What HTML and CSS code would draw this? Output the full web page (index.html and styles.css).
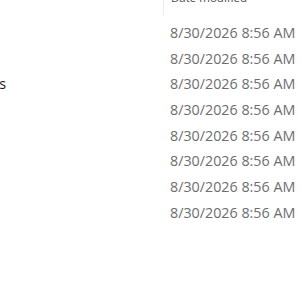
FILE: index.html
```html
<!DOCTYPE html>
<html lang="en">
<head>
    <meta charset="UTF-8">
    <title>Files</title>
    <link rel="stylesheet" href="styles.css">
</head>
<body>
    <div class="view">
        <div class="header">
            <div class="col-name head-cell">Name</div>
            <div class="col-date head-cell">Date modified</div>
        </div>
        <div class="rows">
            <div class="row"><div class="col-name"></div><div class="col-date">8/30/2026 8:56 AM</div></div>
            <div class="row"><div class="col-name"></div><div class="col-date">8/30/2026 8:56 AM</div></div>
            <div class="row"><div class="col-name">Programs</div><div class="col-date">8/30/2026 8:56 AM</div></div>
            <div class="row"><div class="col-name"></div><div class="col-date">8/30/2026 8:56 AM</div></div>
            <div class="row"><div class="col-name"></div><div class="col-date">8/30/2026 8:56 AM</div></div>
            <div class="row"><div class="col-name"></div><div class="col-date">8/30/2026 8:56 AM</div></div>
            <div class="row"><div class="col-name"></div><div class="col-date">8/30/2026 8:56 AM</div></div>
            <div class="row"><div class="col-name"></div><div class="col-date">8/30/2026 8:56 AM</div></div>
        </div>
    </div>
</body>
</html>
```

FILE: styles.css
```css
body {
    margin: 0;
    background: #fff;
    font-family: "Open Sans", sans-serif;
    overflow: hidden;
}
/* list is scrolled: header half hidden, name column mostly off to the left */
.view {
    margin: -16px 0 0 -120px;
}
.header {
    display: flex;
    align-items: flex-start;
    height: 36px;
}
.head-cell {
    height: 31px;
    box-sizing: border-box;
    padding-top: 7px;
    font-size: 11.5px;
    line-height: 13px;
    color: #4c4c4c;
}
.header .col-name {
    border-right: 1px solid #ececec;
    color: transparent;
}
.col-name {
    width: 283px;
    flex: none;
    box-sizing: border-box;
    text-align: right;
    padding-right: 157px;
}
.header .col-name {
    width: 284px;
}
.col-date {
    padding-left: 7px;
}
.row {
    display: flex;
    height: 25.7px;
    font-size: 14.3px;
    line-height: 25.7px;
}
.row .col-name {
    color: #1a1a1a;
}
.row .col-date {
    color: #6e6e6e;
    white-space: nowrap;
}
```
